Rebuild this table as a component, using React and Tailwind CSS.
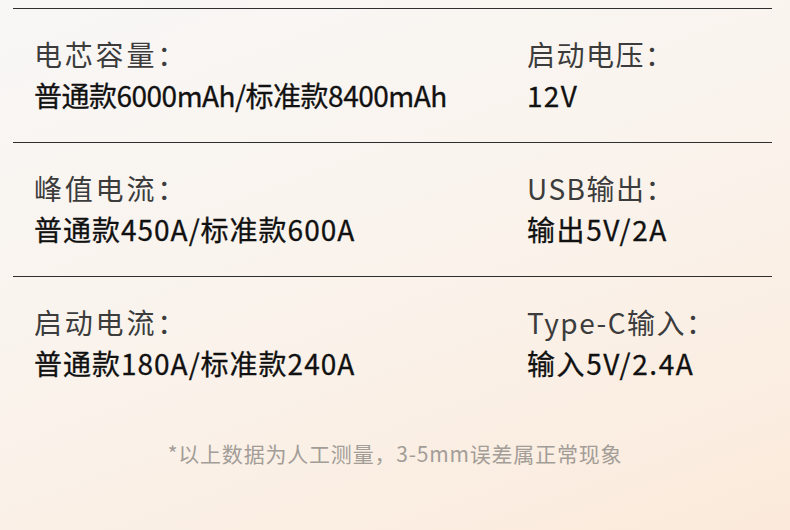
export default function App() {
  const rows = [
    [["电芯容量：", "普通款6000mAh/标准款8400mAh", "tracking-[-0.5px]"], ["启动电压：", "12V", "tracking-[1.3px]"]],
    [["峰值电流：", "普通款450A/标准款600A", "tracking-[1px]"], ["USB输出：", "输出5V/2A", "tracking-[1.6px]"]],
    [["启动电流：", "普通款180A/标准款240A", "tracking-[1px]"], ["Type-C输入：", "输入5V/2.4A", "tracking-[1.6px]"]],
  ];
  return (
    <div
      className="w-[790px] h-[530px] overflow-hidden pt-2 bg-[linear-gradient(160deg,#f8f7f6_0%,#faf3ec_50%,#fbeadb_100%)]"
      style={{ fontFamily: '"Noto Sans CJK SC", "Noto Sans", sans-serif' }}
    >
      {rows.map((row, i) => (
        <div key={i} className="mx-[13px] w-[759px] border-t border-[#2e2e2e] pl-[21px] pt-[25px] pb-[27px] grid grid-cols-[493px_1fr]">
          {row.map(([label, value, tr], j) => (
            <div key={j} className="flex flex-col">
              <div className={"text-[28px] leading-[40px] text-[#3c3c3c] " + (j === 0 ? "tracking-[2.8px]" : "tracking-[1.5px]")}>{label}</div>
              <div className={"mt-[1px] text-[28px] leading-[40px] text-[#111111] font-normal [-webkit-text-stroke:0.3px_#111111] " + tr}>{value}</div>
            </div>
          ))}
        </div>
      ))}
      <div className="mt-[28px] text-center text-[21px] leading-[30px] text-[#a39d98] tracking-[0.8px]">
        *以上数据为人工测量，3-5mm误差属正常现象
      </div>
    </div>
  );
}
